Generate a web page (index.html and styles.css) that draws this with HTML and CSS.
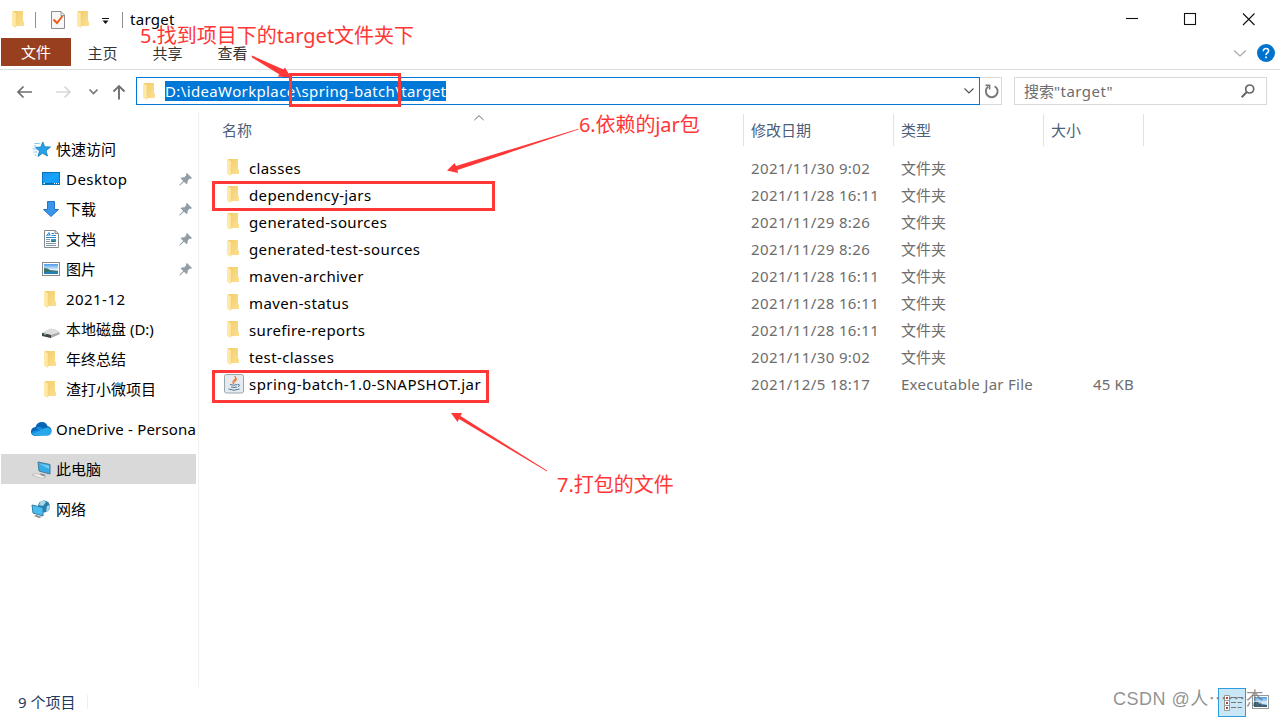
FILE: index.html
```html
<!DOCTYPE html>
<html lang="zh-CN">
<head>
<meta charset="utf-8">
<title>target</title>
<link rel="stylesheet" href="styles.css">
</head>
<body>
<svg class="defs" width="0" height="0">
  <defs>
    <linearGradient id="gold" x1="0" y1="0" x2="1" y2="1"><stop offset="0" stop-color="#f3cd69"/><stop offset="1" stop-color="#fbdf93"/></linearGradient>
    <linearGradient id="sky" x1="0" y1="0" x2="1" y2="1"><stop offset="0" stop-color="#1d8fee"/><stop offset=".5" stop-color="#17a5fb"/><stop offset="1" stop-color="#0d93f2"/></linearGradient>
    <linearGradient id="photo" x1="0" y1="0" x2="0" y2="1"><stop offset="0" stop-color="#4f9bea"/><stop offset=".55" stop-color="#d9effb"/><stop offset="1" stop-color="#8fc0dc"/></linearGradient>
  </defs>
  <symbol id="folder" viewBox="0 0 12 17"><path d="M1 0H11V10L12 11V15H3Z" fill="url(#gold)"/><path d="M0 0L4 2.500V17L0 15Z" fill="#ffe9a6"/><path d="M4 3V16" stroke="#f0cf7b" stroke-width=".5"/></symbol>
  <symbol id="pin" viewBox="0 0 13 13"><path d="M8 0L13 5L11.700 6L10.700 5.600L8.700 7.800Q9 10 7.700 11.300L5 8.700L1 12.400L.3 12.600L.5 11.700L4.200 8L1.600 5.300Q3 4 5.100 4.400L7.300 2.200L7 1Z" fill="#929da5"/></symbol>
</svg>
<div class="window">
  <header class="titlebar">
    <svg class="quick" width="130" height="38" viewBox="0 0 130 38">
      <use href="#folder" x="12" y="11" width="12" height="17"/>
      <path d="M35.500 12V28M122.500 12V28" stroke="#909090"/>
      <path d="M51.500 11.500H61L64.500 15V28.500H51.500Z" fill="#f7f7f7" stroke="#8d8d8d"/><path d="M61 12V15.500H64" fill="none" stroke="#999"/>
      <path d="M53.500 19.500L57 23L62.500 16" fill="none" stroke="#ee5a14" stroke-width="2"/>
      <use href="#folder" x="77" y="11" width="12" height="17"/>
      <path d="M102 18.500H109" stroke="#111"/><path d="M102.500 20.500H108.500L105.500 24Z" fill="#111"/>
    </svg>
    <span class="caption">target</span>
    <svg class="controls" width="168" height="38" viewBox="1112 0 168 38" fill="none" stroke="#111" stroke-width="1.100">
      <path d="M1126 18.500H1138"/><rect x="1184.500" y="13.500" width="11" height="11"/><path d="M1243 13.500L1254.500 25M1254.500 13.500L1243 25"/>
    </svg>
  </header>
  <nav class="ribbon">
    <span class="tab file">文件</span><span class="tab">主页</span><span class="tab">共享</span><span class="tab">查看</span>
    <svg class="help" width="50" height="31" viewBox="1230 38 50 31">
      <path d="M1234 50.500L1240 56L1246 50.500" fill="none" stroke="#a8a8a8" stroke-width="1.200"/>
      <circle cx="1266" cy="53" r="9" fill="#0073cf"/>
      <path d="M1263.400 51.200Q1263.200 48.600 1266 48.600Q1268.600 48.600 1268.600 50.800Q1268.600 52 1267.300 52.900Q1266 53.800 1266 55" fill="none" stroke="#fff" stroke-width="1.500"/><rect x="1265.200" y="56.500" width="1.700" height="1.700" fill="#fff"/>
    </svg>
  </nav>
  <div class="locationbar">
    <svg class="arrows" width="136" height="42" viewBox="0 70 136 42" fill="none">
      <path d="M32 92H18M23.500 86.500L18 92L23.500 97.500" stroke="#6e6e6e" stroke-width="1.700"/>
      <path d="M56 92H70M64.500 86.500L70 92L64.500 97.500" stroke="#d7d7d7" stroke-width="1.700"/>
      <path d="M89.500 89.500L93.500 93.500L97.500 89.500" stroke="#777" stroke-width="1.700"/>
      <path d="M119 99.500V86M113.500 91.500L119 86L124.500 91.500" stroke="#707070" stroke-width="1.900"/>
    </svg>
    <div class="address">
      <svg class="ico-folder" width="12" height="17"><use href="#folder"/></svg>
      <span class="path">D:\ideaWorkplace\spring-batch\target</span>
      <svg class="drop" width="10" height="6" viewBox="0 0 10 6"><path d="M.5 .5L5 5L9.500 .5" fill="none" stroke="#555" stroke-width="1.200"/></svg>
    </div>
    <div class="refresh"><svg width="16" height="16" viewBox="0 0 16 16" fill="none" stroke="#777" stroke-width="1.900"><path d="M10.700 3.200A5.900 5.900 0 1 1 4.200 3.600"/><path d="M1.500 2.300H5.600V6.500" stroke-width="1.600"/></svg></div>
    <div class="search"><span>搜索<span class="latin">"target"</span></span>
      <svg width="14" height="14" viewBox="0 0 14 14" fill="none" stroke="#666"><circle cx="8.700" cy="5" r="4" stroke-width="1.700"/><path d="M5.800 8L.7 13.200" stroke-width="2"/></svg>
    </div>
  </div>
  <main class="content">
    <aside class="sidebar">
      <div class="node root"><svg width="24" height="20" viewBox="30.500 139 24 20"><path d="M42.300 142L44.200 146.800L50 147L45.600 150.700L47 156L42 153.300L37.500 156.500L39 151L35 147.500L40.300 147Z" fill="#28a0e8" stroke="#147cb9" stroke-width=".8"/><path d="M34 143.500H39M33 146H36M32 149H37M33 152H37M34 155H36" stroke="#62b9ed" stroke-width=".8"/></svg><span>快速访问</span></div>
      <div class="node"><svg width="20" height="16" viewBox="0 0 20 16"><rect x="1.500" y="1.500" width="17" height="12" fill="url(#sky)" stroke="#0876bb"/><path d="M2 12.500H18" stroke="#086bab"/><path d="M2.500 12.500H4M13 12.500H14M15 12.500H16M17 12.500H18" stroke="#fff"/></svg><span class="latin">Desktop</span><svg class="pin" width="13" height="13"><use href="#pin"/></svg></div>
      <div class="node"><svg width="20" height="18" viewBox="0 0 20 18"><path d="M6.500 1.500H13.500V9.500H17.500L10 16.500L2.500 9.500H6.500Z" fill="#3996e8" stroke="#2774c6"/></svg><span>下载</span><svg class="pin" width="13" height="13"><use href="#pin"/></svg></div>
      <div class="node"><svg width="20" height="20" viewBox="0 0 20 20"><path d="M3.500 1.500H14L17.500 4.500V18.500H3.500Z" fill="#fff" stroke="#888"/><path d="M14 1.500V4.500H17" fill="none" stroke="#888"/><path d="M5.500 7L8 3.500L9 6.500M6 6H9M10.500 4.500H13M10.500 6.500H15M5 8.500H15" fill="none" stroke="#238bd0"/><path d="M5 14.500H15M5 16.500H15" stroke="#8199aa"/><path d="M5 10.500H9M5 12.500H9" stroke="#8199aa"/><path d="M10 10H15V13H10Z" fill="#3993ca"/><path d="M10 13L12 11.500L15 13Z" fill="#27704b"/></svg><span>文档</span><svg class="pin" width="13" height="13"><use href="#pin"/></svg></div>
      <div class="node"><svg width="20" height="16" viewBox="0 0 20 16"><rect x="1.500" y="1.500" width="17" height="13" fill="#fff" stroke="#898989"/><path d="M3 3H17V13H3Z" fill="url(#photo)"/><path d="M3 7Q7 7 9 9L17 10V11H3Z" fill="#3e7367"/><path d="M3 11Q9 10 17 11V13H3Z" fill="#277fb7"/></svg><span>图片</span><svg class="pin" width="13" height="13"><use href="#pin"/></svg></div>
      <div class="node"><svg class="ico-folder" width="12" height="17"><use href="#folder"/></svg><span class="latin">2021-12</span></div>
      <div class="node"><svg width="20" height="20" viewBox="0 -2 20 20"><path d="M1 12L9 8Q12 7 18 11L19 13L10 17L1 14Z" fill="#a9a9a9"/><path d="M1 12L9 8Q12 7 19 11L10 14Z" fill="#dedede"/><path d="M1 12L10 14V17L1 15Z" fill="#444"/><path d="M3 13.500H5" stroke="#43d36a"/></svg><span>本地磁盘 (D:)</span></div>
      <div class="node"><svg class="ico-folder" width="12" height="17"><use href="#folder"/></svg><span>年终总结</span></div>
      <div class="node"><svg class="ico-folder" width="12" height="17"><use href="#folder"/></svg><span>渣打小微项目</span></div>
      <div class="node root spaced"><svg width="24" height="20" viewBox="31 419 24 20"><path d="M35 436Q30.500 435 31 431Q31.500 427.500 35.500 427Q37 422 42 422Q46 422 47.500 426Q51.500 427 51.500 431L44 435Z" fill="#0864b5"/><path d="M36 428Q40 425.500 43.500 429.500L48 427Q51.500 428 51.500 431.500Q51 435.500 47 435.500H35Q31.500 435 31.500 432Q36 429 40 431Z" fill="#1490df"/><path d="M33 434L43 429Q46 427 49 428.500Q52 430 51 433Q50 435.500 47 435.500H35Q33.500 435.300 33 434Z" fill="#28a8ea"/></svg><span class="onedrive">OneDrive - Persona</span></div>
      <div class="node root spaced selected"><svg width="24" height="20" viewBox="31 459 24 20"><path d="M38 462L50 464.500V474L39 471Z" fill="#35abe7" stroke="#477b98"/><path d="M39 463.500L49 465.500V469Z" fill="#74cbef"/><path d="M40 473L46 475L42 477" fill="#888"/><path d="M32 475L36 473.500L46 477L42 478.500Z" fill="#f0f0f0" stroke="#b5b5b5" stroke-width=".7"/></svg><span>此电脑</span></div>
      <div class="node root spaced"><svg width="24" height="20" viewBox="31 499 24 20"><circle cx="44" cy="506.500" r="6" fill="#2b7fae"/><path d="M41 501Q44 500 46 502L43 506L39 505ZM47 506L50 505Q50 510 46 512Z" fill="#a9d9e9"/><path d="M32 505L43 507.500V516L33 513Z" fill="#4abdf0" stroke="#337da5"/><path d="M36 515L42 517L39 518L34 516Z" fill="#888"/></svg><span>网络</span></div>
    </aside>
    <section class="files">
      <div class="row head"><span class="name">名称</span><span>修改日期</span><span>类型</span><span>大小</span><span></span>
        <svg class="sort" width="10" height="6" viewBox="0 0 10 6"><path d="M.5 5L5 .7L9.500 5" fill="none" stroke="#666"/></svg></div>
      <div class="row"><span class="name"><svg class="ico-folder" width="12" height="17"><use href="#folder"/></svg>classes</span><span class="when">2021/11/30 9:02</span><span>文件夹</span></div>
      <div class="row"><span class="name"><svg class="ico-folder" width="12" height="17"><use href="#folder"/></svg>dependency-jars</span><span class="when">2021/11/28 16:11</span><span>文件夹</span></div>
      <div class="row"><span class="name"><svg class="ico-folder" width="12" height="17"><use href="#folder"/></svg>generated-sources</span><span class="when">2021/11/29 8:26</span><span>文件夹</span></div>
      <div class="row"><span class="name"><svg class="ico-folder" width="12" height="17"><use href="#folder"/></svg>generated-test-sources</span><span class="when">2021/11/29 8:26</span><span>文件夹</span></div>
      <div class="row"><span class="name"><svg class="ico-folder" width="12" height="17"><use href="#folder"/></svg>maven-archiver</span><span class="when">2021/11/28 16:11</span><span>文件夹</span></div>
      <div class="row"><span class="name"><svg class="ico-folder" width="12" height="17"><use href="#folder"/></svg>maven-status</span><span class="when">2021/11/28 16:11</span><span>文件夹</span></div>
      <div class="row"><span class="name"><svg class="ico-folder" width="12" height="17"><use href="#folder"/></svg>surefire-reports</span><span class="when">2021/11/28 16:11</span><span>文件夹</span></div>
      <div class="row"><span class="name"><svg class="ico-folder" width="12" height="17"><use href="#folder"/></svg>test-classes</span><span class="when">2021/11/30 9:02</span><span>文件夹</span></div>
      <div class="row"><span class="name archive"><svg class="jar" width="20" height="20" viewBox="0 0 20 20"><rect x=".5" y=".5" width="19" height="18.500" rx="2" fill="#e5eaee" stroke="#9ba5af"/><path d="M10.500 2Q13 4 10.500 6Q7.500 8 10 10M13 5Q10 6.500 11 8.500" fill="none" stroke="#ed7328" stroke-width="1.200"/><path d="M6 10.500Q10 12 13.500 10.500M7 13Q10 14 13 13M4.500 15Q10 17.500 15.500 15M14 10.500Q17 10.500 14 13" fill="none" stroke="#4e7893"/></svg>spring-batch-1.0-SNAPSHOT.jar</span><span class="when">2021/12/5 18:17</span><span class="kind">Executable Jar File</span><span class="size">45 KB</span></div>
    </section>
  </main>
  <footer class="status"><span class="count">9 个项目</span>
    <svg class="views" width="62" height="31" viewBox="1218 687 62 31">
      <rect x="1218.500" y="688.500" width="27" height="28" fill="#c9e7f6" stroke="#2d9ddd"/>
      <path d="M1224.500 695.500H1229.500V710.500H1224.500ZM1224.500 700.500H1229.500M1224.500 705.500H1229.500" fill="#fff" stroke="#999"/><path d="M1226 698H1228M1226 703H1228M1226 708H1228" stroke="#a34b37" stroke-width="2"/><path d="M1231 697.500H1236M1237.500 697.500H1242M1231 702.500H1236M1237.500 702.500H1242M1231 707.500H1236M1237.500 707.500H1242" stroke="#777"/>
      <rect x="1252.500" y="695.500" width="16" height="13" fill="#fff" stroke="#999"/><path d="M1254 697H1267V707H1254Z" fill="url(#photo)"/><path d="M1254 702Q1258 701 1260 704L1267 705V707H1254Z" fill="#355f75"/>
    </svg>
  </footer>
  <div class="overlay">
    <svg width="1280" height="718" viewBox="0 0 1280 718">
      <g fill="none" stroke="#ff3737" stroke-width="3"><rect x="290.500" y="74.500" width="109" height="31"/><rect x="213.500" y="182.500" width="280" height="27"/><rect x="213.500" y="371.500" width="274" height="30"/></g>
      <g fill="#ff3737"><path d="M251.500 55.500L253 56L283.500 69.500L285 67.500L291 77.500L277.500 76.500L279.500 74.500L252 57.500Z"/><path d="M578.500 129.500L457.500 170L458 173L447 170.500L454.500 163L456 166L578.500 128.800Z"/><path d="M547 471.500L459 419L457.500 422L451 413L462 413L460.500 416L547 470.500Z"/></g>
    </svg>
    <span class="note five">5.找到项目下的target文件夹下</span>
    <span class="note six">6.依赖的jar包</span>
    <span class="note seven">7.打包的文件</span>
    <span class="watermark">CSDN @人⋯⋯杰</span>
  </div>
</div>
</body>
</html>
```
FILE: styles.css
```css
* { box-sizing: border-box; }
body { margin: 0; background: #fff; color: #000; font: 15px/20px "Noto Sans", "Noto Sans CJK SC", sans-serif; }
svg { display: block; flex: none; }
.defs { position: absolute; }
.window { position: relative; width: 1280px; height: 718px; overflow: hidden; display: flex; flex-direction: column; white-space: nowrap; }
.titlebar { height: 38px; display: flex; align-items: center; }
.caption { flex: 1; letter-spacing: .3px; }
.ribbon { height: 32px; padding-left: 1px; display: flex; align-items: flex-start; border-bottom: 1px solid #dadbdc; color: #333; }
.tab { width: 65px; height: 28px; line-height: 30px; text-align: center; }
.tab.file { width: 70px; margin-right: -1px; background: #983f20; color: #fff; line-height: 29px; }
.help { margin-left: auto; }
.locationbar { height: 42px; display: flex; align-items: flex-start; }
.address { width: 844px; height: 28px; margin-top: 7px; padding: 0 5px 0 6px; display: flex; align-items: center; border: 1px solid #0078d7; }
.path { margin-left: 10px; background: #0078d7; color: #fff; letter-spacing: .37px; }
.latin { letter-spacing: .45px; }
.drop { margin-left: auto; }
.refresh { width: 22px; height: 28px; margin-top: 7px; display: flex; align-items: center; justify-content: center; border: 1px solid #d9d9d9; border-left: 0; }
.refresh svg { margin-left: 2px; }
.search { width: 253px; height: 28px; margin: 7px 0 0 12px; padding: 0 11px 0 9px; display: flex; align-items: center; justify-content: space-between; border: 1px solid #d9d9d9; color: #6d6d6d; }
.content { height: 575px; display: flex; }
.sidebar { width: 199px; padding: 22px 2px 0 1px; border-right: 1px solid #f1f1f1; }
.node { height: 30px; padding-left: 40px; display: flex; align-items: center; }
.node span { margin-left: 5px; }
.node .ico-folder { margin: 0 5px 0 3px; }
.node.root { padding-left: 30px; }
.node.root span { margin-left: 1px; }
.node.spaced { margin-top: 10px; }
.onedrive { letter-spacing: .18px; }
.selected { background: #d9d9d9; }
.node .pin { margin-left: auto; margin-right: 4px; }
.files { flex: 1; }
.row { height: 27px; display: grid; grid-template-columns: 544px 150px 150px 100px 1fr; align-items: center; color: #6d6d6d; }
.row > span { padding: 0 0 2px 8px; }
.row .name { padding-left: 28px; display: flex; align-items: center; color: #000; letter-spacing: .37px; }
.row .name.archive { letter-spacing: .45px; }
.row .when { letter-spacing: .38px; }
.row .kind { letter-spacing: .28px; }
.row .name .ico-folder { margin: -1px 10px 0 0; }
.row .name .jar { margin: -1px 5px -1px -3px; }
.row .size { padding: 0 9px 2px 0; text-align: right; letter-spacing: .2px; }
.head { position: relative; height: 43px; padding-top: 2px; align-items: start; color: #4c607a; }
.head > span { height: 32px; line-height: 33px; border-left: 1px solid #e2e2e2; padding: 0 0 0 7px; }
.row.head .name { padding: 0 0 0 23px; border: 0; color: #4c607a; letter-spacing: 0; }
.sort { position: absolute; left: 275px; top: 3px; }
.status { height: 31px; display: flex; align-items: center; color: #1e395b; }
.count { margin: -2px 0 0 18px; padding-right: 12px; border-right: 1px solid #eee; line-height: 14px; }
.views { margin-left: auto; }
.overlay { position: absolute; inset: 0; pointer-events: none; }
.note { position: absolute; color: #ff3737; font-size: 20px; line-height: 28px; }
.five { left: 140px; top: 22px; }
.six { left: 579px; top: 111px; letter-spacing: -.1px; }
.seven { left: 557px; top: 471px; }
.watermark { position: absolute; left: 1113px; top: 687px; color: rgba(110,110,110,.75); font: 18px/24px "Liberation Sans", "Noto Sans CJK SC", sans-serif; letter-spacing: .5px; }
```
